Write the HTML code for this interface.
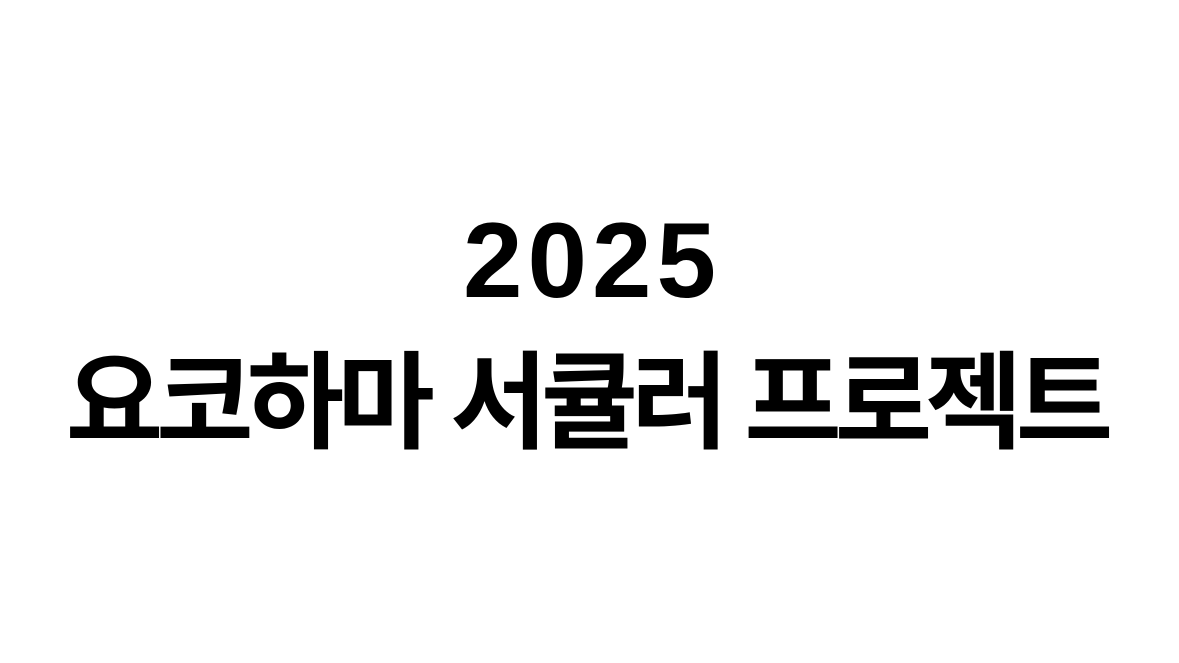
<!DOCTYPE html>
<html><head><meta charset="utf-8"><style>
html,body{margin:0;padding:0;background:#fff;width:1179px;height:663px;overflow:hidden;position:relative}
.a{position:absolute;left:0;width:1179px;text-align:center;color:#000;white-space:nowrap}
.y{top:207px;font:bold 107px/107px "Liberation Sans",Arial,sans-serif;letter-spacing:5px;text-indent:5px}
.k{top:351px;font:bold 106px/106px "Liberation Sans","Noto Sans CJK KR",sans-serif;letter-spacing:-7px;text-indent:-7px}
</style></head><body>
<div class="a y">2025</div>
<div class="a k">요코하마 서큘러 프로젝트</div>
</body></html>
